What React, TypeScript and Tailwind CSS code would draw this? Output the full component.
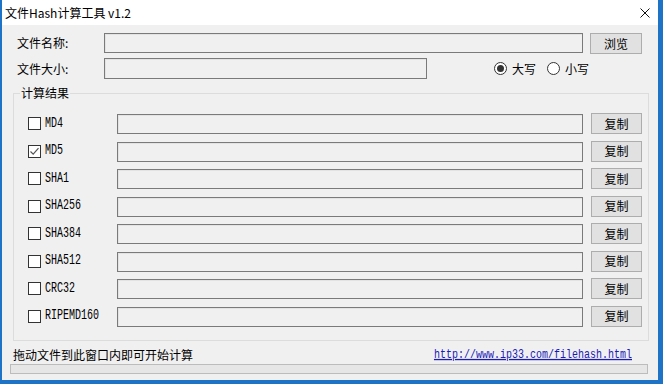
const ALGOS = ["MD4", "MD5", "SHA1", "SHA256", "SHA384", "SHA512", "CRC32", "RIPEMD160"];

const cjk = "font-['Microsoft_YaHei','Noto_Sans_CJK_SC',sans-serif]";
const mono = "font-['SimSun','Liberation_Mono',monospace]";

function TextBox({ className }: { className: string }) {
  return (
    <div
      className={`border border-[#7a7a7a] bg-[#f0f0f0] shadow-[inset_1px_1px_0_#e3e3e3] ${className}`}
    />
  );
}

function Button({ label, className }: { label: string; className: string }) {
  return (
    <div
      className={`flex items-center justify-center border border-[#adadad] bg-[#e1e1e1] text-[12px] leading-none text-black ${className}`}
    >
      {label}
    </div>
  );
}

function CheckBox({ checked }: { checked?: boolean }) {
  return (
    <div className="flex h-[13px] w-[13px] shrink-0 items-center justify-center border border-[#333] bg-white">
      {checked && (
        <svg width="11" height="11" viewBox="0 0 11 11">
          <path d="M1.5 5.5 L4.2 8.2 L9.5 2.2" fill="none" stroke="#555" strokeWidth="1.2" />
        </svg>
      )}
    </div>
  );
}

function Radio({ checked, label }: { checked?: boolean; label: string }) {
  return (
    <div className="flex items-center">
      <div className="flex h-[13px] w-[13px] items-center justify-center rounded-full border border-[#333] bg-white">
        {checked && <div className="h-[7px] w-[7px] rounded-full bg-[#333]" />}
      </div>
      <span className="ml-[5px] text-[12px] leading-[16px]">{label}</span>
    </div>
  );
}

export default function App() {
  return (
    <div className={`flex h-[384px] w-[663px] bg-[#1f73c6] pb-[4px] pl-[2px] pr-[5px] text-black ${cjk}`}>
      <div className="flex flex-1 flex-col">
        {/* title bar */}
        <div className="flex h-[25px] items-center justify-between bg-white pl-[3px] pr-[8px]">
          <span className="text-[12px] leading-[16px]">文件Hash计算工具 v1.2</span>
          <svg width="10" height="10" viewBox="0 0 10 10">
            <path d="M0.5 0.5 L9.5 9.5 M9.5 0.5 L0.5 9.5" stroke="#111" strokeWidth="1" />
          </svg>
        </div>

        <div className="flex flex-1 flex-col bg-[#f0f0f0]">
          <div className="mt-[8px] flex h-[21px] items-start pl-[15px]">
            <span className="w-[87px] text-[12px] leading-[20px]">文件名称:</span>
            <TextBox className="h-[20px] w-[479px]" />
            <Button label="浏览" className="ml-[7px] h-[21px] w-[52px]" />
          </div>

          <div className="mt-[4px] flex h-[21px] items-center pl-[15px] pr-[69px]">
            <span className="w-[87px] text-[12px] leading-[20px]">文件大小:</span>
            <TextBox className="h-[21px] w-[323px]" />
            <div className="flex flex-1 items-center justify-end gap-[11px]">
              <Radio checked label="大写" />
              <Radio label="小写" />
            </div>
          </div>

          <fieldset className="ml-[11px] mt-[6px] w-[636px] border border-[#dcdcdc] pb-[13px] pl-[14px]">
            <legend className="ml-[-8px] px-[1px] text-[12px] leading-[16px]">计算结果</legend>
            <div className="mt-[12px] flex flex-col gap-[6.5px]">
              {ALGOS.map((name) => (
                <div key={name} className="flex h-[21px] items-center">
                  <CheckBox checked={name === "MD5"} />
                  <span className={`ml-[4px] inline-block w-[72px] scale-y-[1.4] origin-center text-[10px] leading-[14px] ${mono}`}>
                    {name}
                  </span>
                  <TextBox className="mt-[1px] h-[20px] w-[466px]" />
                  <Button label="复制" className="ml-[8px] h-[21px] w-[51px]" />
                </div>
              ))}
            </div>
          </fieldset>

          <div className="mt-[6px] flex items-center justify-between pl-[11px] pr-[26px]">
            <span className="text-[12px] leading-[16px]">拖动文件到此窗口内即可开始计算</span>
            <span className={`inline-block scale-y-[1.3] text-[10px] leading-[16px] text-[#1a1ab8] underline ${mono}`}>
              http://www.ip33.com/filehash.html
            </span>
          </div>

          <div className="ml-[8px] mt-[1px] h-[10px] w-[638px] border border-[#bcbcbc] bg-[#e6e6e6]" />
        </div>
      </div>
    </div>
  );
}
